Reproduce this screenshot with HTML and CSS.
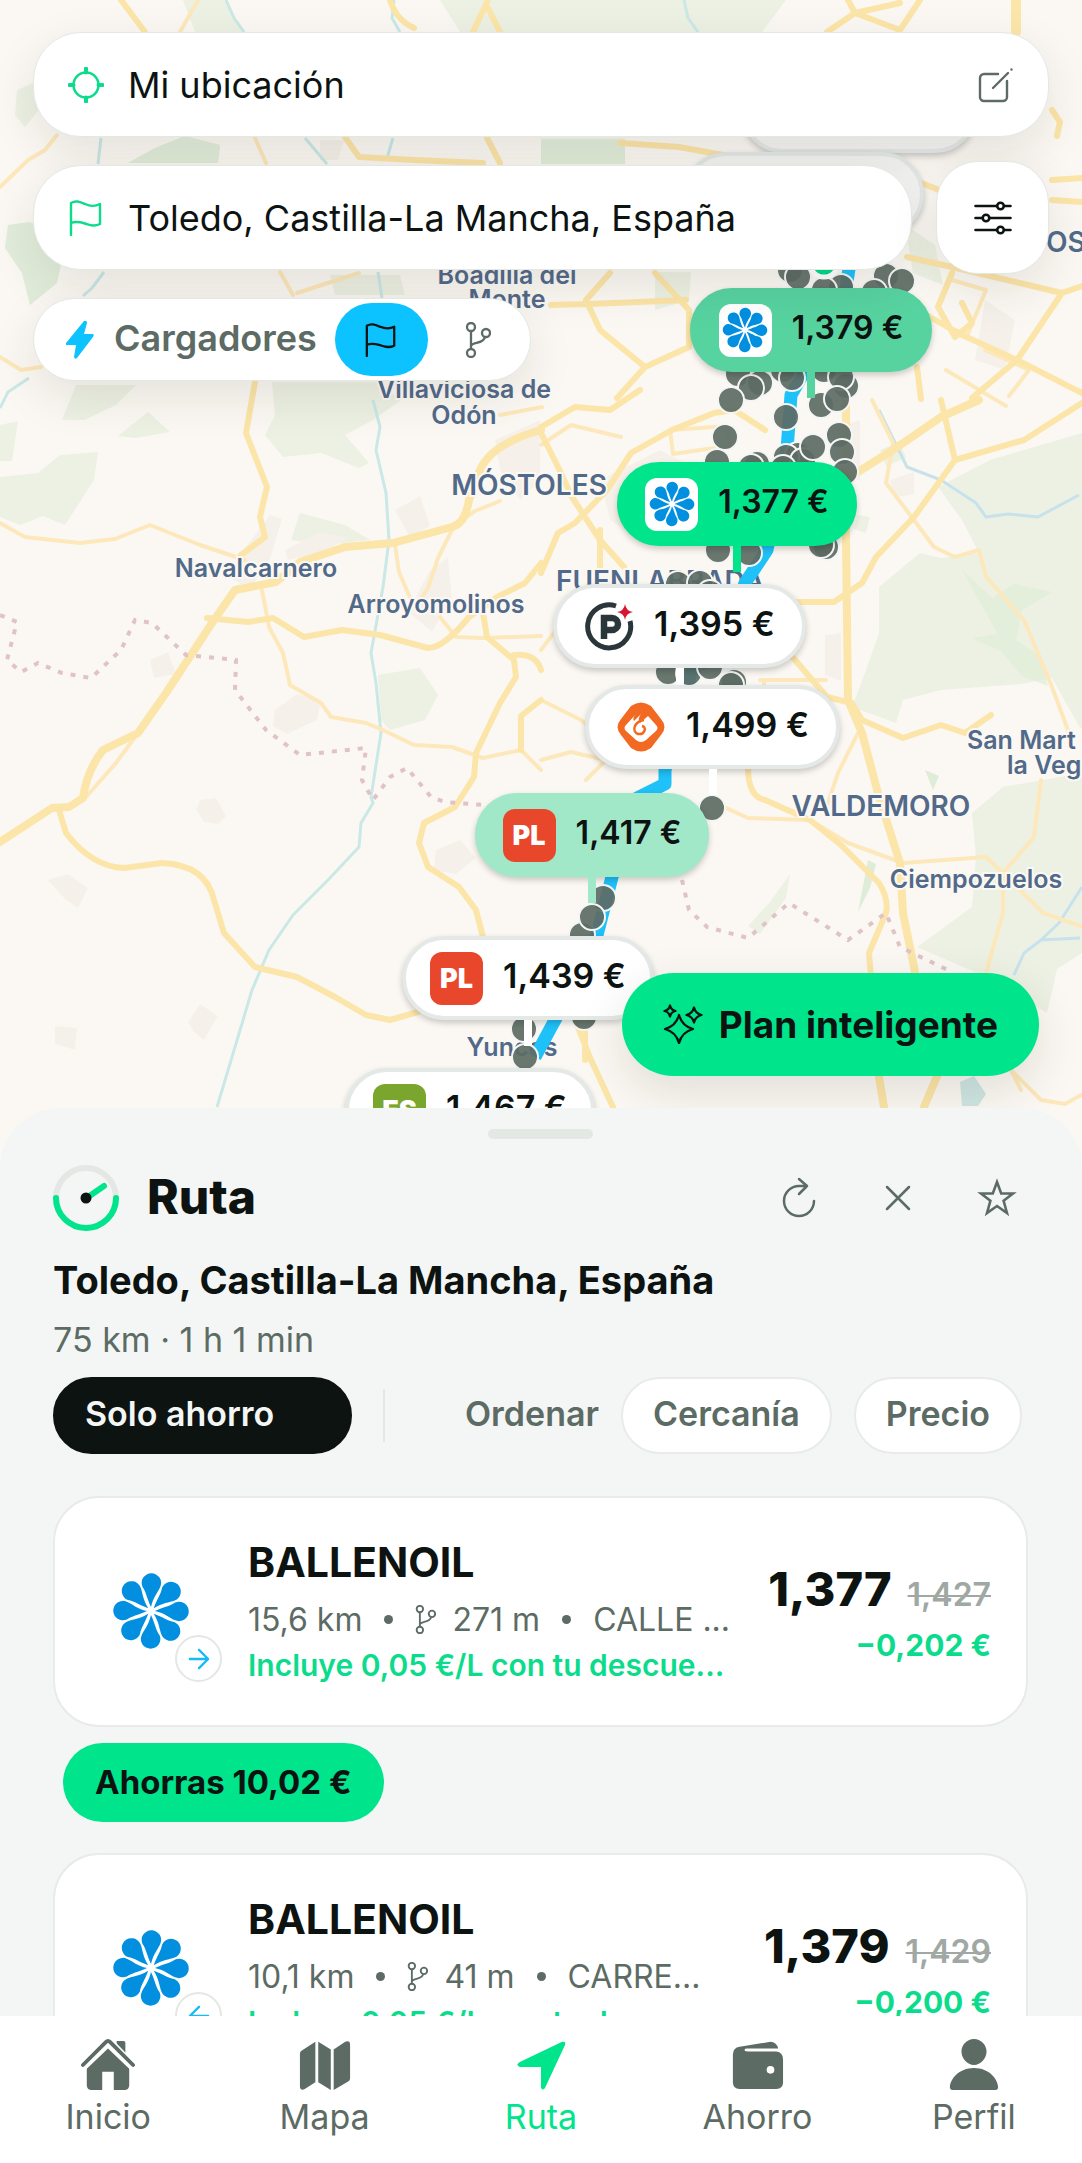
FILE: index.html
```html
<!DOCTYPE html>
<html lang="es">
<head>
  <meta charset="UTF-8">
  <meta name="viewport" content="width=device-width, initial-scale=1.0">
  <title>Ruta</title>
  <link rel="stylesheet" href="styles.css">
</head>
<body>
  <!-- Shared icons -->
  <svg class="sprite" aria-hidden="true">
    <symbol id="flag" viewBox="0 0 36 36">
      <path d="M3 35V3c5-3 9-1 14 1s9 3 15 0v20c-6 3-10 1-15-.500S8 21 3 23" fill="none" stroke="currentColor" stroke-width="2.400" stroke-linecap="round" stroke-linejoin="round"/>
    </symbol>
    <symbol id="branch" viewBox="0 0 26 36">
      <g fill="none" stroke="currentColor" stroke-width="2.300">
        <circle cx="6" cy="5" r="4"/><circle cx="6" cy="31" r="4"/><circle cx="21" cy="11" r="4"/>
        <path d="M6 9v18M6 24c1-4 13-2 14-9"/>
      </g>
    </symbol>
    <symbol id="ballenoil" viewBox="-50 -50 100 100">
      <g fill="#028fe0">
        <path id="petal" d="M0-5C-6-18-6-24-11-31A12.500 12.500 0 1 1 12-31C9-24 3-18 0-5z"/>
        <use href="#petal" transform="rotate(45)"/><use href="#petal" transform="rotate(90)"/>
        <use href="#petal" transform="rotate(135)"/><use href="#petal" transform="rotate(180)"/>
        <use href="#petal" transform="rotate(225)"/><use href="#petal" transform="rotate(270)"/>
        <use href="#petal" transform="rotate(315)"/>
      </g>
    </symbol>
  </svg>

  <div class="app">
    <div class="map">
      <svg class="map-tiles" viewBox="0 0 1082 1240" preserveAspectRatio="xMidYMin slice" aria-hidden="true">
        <rect width="1082" height="1240" fill="#fbf8f3"/>
        <!-- Parks and woods -->
        <g fill="#ecf1e3">
          <path d="M183 0h42l18 32h-48zM17 90l23-10 5 20-8 12-12 15-10-12zM128 163l27-15 30-12 35 9-2 18zM8 225l22-3 25 13 6 28-4 20-27 22-8-32-17-25z"/>
          <path d="M440 0h346l-24 32H460zM541 138h84v26h-84zM655 272h36l-2 28-34 10zM330 275h70l5 20h-70z"/>
          <path d="M0 477l38-4 22-18 38-3-4 28-29 45-22-9-23 9-20-8zM62 420l14-35h60l-20 20-32 15zM118 436l30-24 22 20-35 6zM0 425l18-4-6 40H0z"/>
          <path d="M272 382h105l24 18-28 20-28 15 24 28-10 5-38-15-38 4-18-22 10-20zM300 513l45 12 25 15-45 5-34-5zM378 675l42-7 18 27-13 25-35 10-9-10z"/>
          <path d="M1082 433l-92 27-52 27 24 33 17 33-38 5-21-5-41 34v46l-14 40-13 34 44 16 7-23 38-10 80-6 31-6 28 50h22zM1082 773l-79 14-31 26 4 44-4 50-55 40 60 26 70 40 10-44 25-16z"/>
          <path d="M905 225l30 20 8 40-30-12zM880 450l20-8 6 16-20 8zM858 515l12 2-4 16-12-4zM748 926l22-24 20-28-4 24-26 36z"/>
        </g>
        <g fill="#dfecd7">
          <path d="M962 570l30 28 22-14 38 8-30 18-6 30 24 16 8 30-26-10-20-24-30-14 26-4z" opacity=".7"/>
          <path d="M868 860l8 4-6 24-12 24zM925 770l14 6-6 14z"/>
          <path d="M128 163l27-15 30-12 35 9-2 18zM8 225l22-3 25 13 6 28-4 20-27 22-8-32-17-25zM541 140h84v24h-84z" opacity=".8"/>
        </g>
        <!-- Built-up areas -->
        <g fill="#f5f1ea">
          <path d="M240 555l30-40 12 4-12 40-20 30-18-10zM285 550l35-18 28 6-25 14-35 8zM395 510l25-14 10 30-20 12zM430 570l18-12 4 40-20 34-24-20zM275 710l22-16 24 6-4 20-30 14-14-8z"/>
          <path d="M200 800l16-2 10 18-8 8-14-2-8-12zM48 880l20-6 20 14-10 20-14-10zM55 1026l22 2-2 22-20-6zM188 1022l12-18 18 12-14 24-10-8zM436 850l24-10 16 18-20 16-22-4zM150 660l18-8 8 22-22 4z"/>
          <path d="M495 440l45-20v60l-20 20-20-30zM600 480l60-30 40 20-60 70-30-20zM825 635l16-2v48l-16-6zM890 480l24-8v22l-20 4zM985 300l30 20-10 50-30-10zM830 430l30-10v60h-20zM320 140h24l-6 20h-18z"/>
        </g>
        <!-- Rivers -->
        <g fill="none" stroke="#c9e8e6" stroke-width="3" stroke-linejoin="round">
          <path d="M373 400l7 27-4 23 10 43 3 47-6 47-12 66 5 30 5 50-10 64 2 6-12 20-2 24-31 33-35 35-24 35-17 40-17 57-18 60M101 138l-3 26M104 272l-12 16-9 8M0 408l8-16 21-14M226 0l8 18 10 14M305 138l22 26M378 272l4 26M394 0l-2 18 8 14M393 138l-6 20M684 0l4 18 10 14"/>
          <path d="M879 410l28 57 34 13 35 23 10 14 22-3 30 3 41-22M1082 887l-23 36-18 17-17 13-10 22M1040 940l40-2" stroke="#c7e2ea"/>
          <path d="M960 1082l14-6 12 18-8 12h-16z" fill="#cfe6e4" stroke="none"/>
        </g>
        <!-- Minor roads -->
        <g fill="none" stroke="#fde8bb" stroke-width="4" stroke-linecap="round" stroke-linejoin="round">
          <path d="M0 523l25 14 55 6 35-4 35-14 50 20 45 15M262 590l7 37 14 26 7 32 31 18 10 14 35 6 17 7 31 15 38 2 31 11 38-8 20 20M138 733l-22 30-30 34"/>
          <path d="M395 545l4 27 12 28M452 530l-14 28-10 30-8 12M455 525l20-14 25-10M500 415l42-8M440 617l16 20 27 1 58-2"/>
          <path d="M872 400l21 43-7 40 28 37 20 27 21 10 24-7 7 27 38 43 28 67 17 46M724 807l24 11 62 2 38 23 55 20 83-6 17 16v40l-17 60M1041 780l-7 57-31 36 40 40 40 14"/>
          <path d="M541 445l30-20 50 12M541 700l40 20 35 30-30 30M541 650l30-40 50-12M600 590l60 10 60 40M760 680h66M764 680v20M775 690v40M541 760l30-8 60 14M858 733l-20 40-10 30M670 430l58-4v20l-55 8zM640 540l30-30 36 30M1021 1090l-10-20 30 30 24 4 18-10"/>
          <path d="M359 273l-62 20M280 272l13 23M0 187l28-27 17-10 12-15M198 0l-18 32M255 138l11 25M0 357l21 13 20-3M946 370l60 36M985 350l44 20-20 26M952 280l34 10-18 44-20-6"/>
        </g>
        <!-- Main roads -->
        <g fill="none" stroke="#fce5a8" stroke-width="6" stroke-linecap="round" stroke-linejoin="round">
          <path d="M255 382l-9 51 21 54-7 30 5 20-24 18"/>
          <path d="M541 430q-50 14-61 40l-11 30q-4 24-17 27l-59 16-48 4-45 15-24 20-41 8-21 30-48 73-28 40-35 17q-16 20-20 48l-14 9-17 1-52 34" stroke-width="8"/>
          <path d="M207 618l41 4 25-4 31 19 38-7 38 5 48 13q16 0 41-31l28-20 28-14 16-20"/>
          <path d="M483 613l4 24 27 23 2 17-16 26-24 50-2 24-19 30-31 16-5 20 9 24 31 20 17 23 7 27M514 655q22-2 27 15M541 700l-20 16v34"/>
          <path d="M59 810l7 23q26 34 58 35l38-5q44 2 52 37l10 33 31 34 42 10 38 20 31 18 24 5 28-8"/>
          <path d="M575 1020l16 40 22 47M585 1030v30"/>
          <path d="M845 480l48-30 48-33 38-17M846 400v140l2 160 14 33 17 64 21 66 3 50 12 59M884 1107l-10-60M924 1107l17-40" stroke-width="8"/>
          <path d="M1082 403l-58 37-69 20-41 57-38 40-14 26-28 19-38 0M941 400l14 60M789 653l38 44 25 6 10 17 41 18 38-13 24 8M965 733l26-18"/>
          <path d="M748 767q0 30 17 33l45 20 31 25 38 38q10 16 7 30l-17 40 5 60"/>
          <path d="M541 427l34-20 35 3 30-20M541 433l17 34 14 30 28 43 24 27M541 573l17-40 17-10 32-33 24-37 41-23 42-17 20-3 31 20M600 530v40M780 615q-14 20-10 40"/>
          <path d="M121 0l24 32M345 137l14 20 55 3 69 3M487 138l13 25M390 0q6 20 24 28M488 0l-15 32M488 8l12 24M848 0l7 13-28 19M920 0l-20 30-45-17 45-10M620 143l59 4 55 10M1052 110l8 12-3 14M914 180l30 12M1052 180l30-2M1052 200l30 2"/>
          <path d="M1016 0v32" stroke-width="10"/>
          <path d="M610 273l-24 27 14 30 45 37-28 31M551 305l40-1 95-4M655 273l34 37v37l-44 20M952 273l-14 34 17 30 17-14-10-20M907 257l45 10 110 26 20-7M1062 293l-45 67-45 38M1017 360l65 33M900 300l60 34 57 26M917 367l4 32"/>
        </g>
        <!-- Province boundary -->
        <path d="M0 615l17 7-10 38 14 12 17-9 24 10 29 5 30-28 14-30 17 3 34 32 50 5-1 30 31 40 34 25 66-7-4 32 11 20 17-23 17-9 24 29 14 5 38 3M682 880l7 30 18 17 41 11 41-35 59 37 38-27 14 34 52 25" fill="none" stroke="#e0c3c8" stroke-width="4" stroke-dasharray="5 8"/>
        <!-- Town names -->
        <g class="town" text-anchor="middle">
          <text x="507" y="284">Boadilla del</text>
          <text x="507" y="308">Monte</text>
          <text x="464" y="398">Villaviciosa de</text>
          <text x="464" y="424">Odón</text>
          <text x="529" y="495" class="city">MÓSTOLES</text>
          <text x="256" y="577">Navalcarnero</text>
          <text x="436" y="613">Arroyomolinos</text>
          <text x="660" y="591" class="city">FUENLABRADA</text>
          <text x="881" y="816" class="city">VALDEMORO</text>
          <text x="976" y="888">Ciempozuelos</text>
          <text x="512" y="1056">Yuncos</text>
        </g>
        <g class="town">
          <text x="967" y="749">San Mart</text>
          <text x="1007" y="774">la Veg</text>
          <text x="1046" y="252" class="city">OS</text>
        </g>
        <!-- Route and stations off the shortlist -->
        <path d="M850 262l-6 40-53 93-4 55-20 100-22 33-20 60-34 30-26 97v14l-28 14-25 79-15 58-42 85-20 37" fill="none" stroke="#1fc1f9" stroke-width="13" stroke-linejoin="round"/>
        <g class="station">
          <circle cx="790" cy="270" r="13"/><circle cx="798" cy="277" r="13"/><circle cx="841" cy="287" r="13"/><circle cx="824" cy="290" r="13"/><circle cx="886" cy="276" r="13"/><circle cx="902" cy="281" r="13"/><circle cx="874" cy="292" r="13"/>
          <circle cx="738" cy="374" r="13"/><circle cx="760" cy="383" r="13"/><circle cx="751" cy="388" r="13"/><circle cx="731" cy="400" r="13"/><circle cx="783" cy="370" r="13"/><circle cx="792" cy="378" r="13"/><circle cx="824" cy="370" r="13"/><circle cx="846" cy="386" r="13"/><circle cx="841" cy="377" r="13"/><circle cx="821" cy="405" r="13"/><circle cx="837" cy="399" r="13"/>
          <circle cx="786" cy="417" r="13"/><circle cx="725" cy="437" r="13"/><circle cx="717" cy="462" r="13"/><circle cx="757" cy="464" r="13"/><circle cx="751" cy="467" r="13"/><circle cx="798" cy="455" r="13"/><circle cx="786" cy="457" r="13"/><circle cx="803" cy="461" r="13"/><circle cx="783" cy="468" r="13"/><circle cx="813" cy="447" r="13"/><circle cx="839" cy="435" r="13"/><circle cx="842" cy="452" r="13"/><circle cx="845" cy="472" r="13"/>
          <circle cx="718" cy="550" r="13"/><circle cx="749" cy="553" r="13"/><circle cx="826" cy="547" r="13"/><circle cx="821" cy="545" r="13"/><circle cx="678" cy="584" r="13"/><circle cx="700" cy="583" r="13"/><circle cx="710" cy="593" r="13"/><circle cx="668" cy="672" r="13"/><circle cx="689" cy="673" r="13"/><circle cx="710" cy="667" r="13"/><circle cx="734" cy="682" r="13"/><circle cx="731" cy="685" r="13"/>
          <circle cx="712" cy="808" r="13"/><circle cx="603" cy="898" r="13"/><circle cx="582" cy="935" r="13"/><circle cx="592" cy="917" r="13"/><circle cx="584" cy="1017" r="13"/><circle cx="524" cy="1029" r="13"/><circle cx="525" cy="1057" r="13"/>
        </g>
        <circle cx="824" cy="263" r="14" fill="#00d98a" stroke="#fff" stroke-width="5"/>
      </svg>

      <button class="pin pin-a" type="button" aria-label="Gasolinera"></button>
      <button class="pin pin-b" type="button" aria-label="Gasolinera"></button>
      <button class="pin pin-c good" type="button"><span class="brand white"><svg><use href="#ballenoil"/></svg></span><span class="amount">1,379 €</span></button>
      <button class="pin pin-d best" type="button"><span class="brand white"><svg><use href="#ballenoil"/></svg></span><span class="amount">1,377 €</span></button>
      <button class="pin pin-e" type="button">
        <svg class="brand-icon" viewBox="0 0 50 50"><path d="M32 5A21.500 21.500 0 1 0 46 20" fill="none" stroke="#2b363b" stroke-width="5"/><path d="M20 38V17h8a6 6 0 0 1 0 12h-5" fill="none" stroke="#2b363b" stroke-width="6.500"/><path d="M41 3q1 7 8 8-7 1-8 8-1-7-8-8 7-1 8-8z" fill="#d9142f"/></svg>
        <span class="amount">1,395 €</span>
      </button>
      <button class="pin pin-f" type="button">
        <svg class="brand-icon" viewBox="0 0 50 50"><path d="M15 4q10-7 20 0l10 13q7 8 0 16L35 46q-10 7-20 0L5 33q-7-8 0-16z" fill="#f26a21"/><path d="M20 12 10 23q-3 3 0 6l10 9q5 4 10 0l10-9q3-3 0-6l-8-9-8 7q-3-4 1-9l-7 7q-2-3 2-7z" fill="#fff"/><path d="M28 18c-11 2-12 12-6 14 7 1 9-7 4-8" fill="none" stroke="#f26a21" stroke-width="2.500"/></svg>
        <span class="amount">1,499 €</span>
      </button>
      <button class="pin pin-g fair" type="button"><span class="brand red">PL</span><span class="amount">1,417 €</span></button>
      <button class="pin pin-h" type="button"><span class="brand red">PL</span><span class="amount">1,439 €</span></button>
      <button class="pin pin-i" type="button"><span class="brand green">ES</span><span class="amount">1,467 €</span></button>
    </div>

    <header class="search">
      <div class="field">
        <label for="origin" aria-label="Origen">
          <svg class="icon green-icon" viewBox="0 0 36 36"><g fill="none" stroke="currentColor" stroke-width="2.500" stroke-linecap="round"><circle cx="18" cy="18" r="12.500"/><path d="M18 1.500v4M18 30.500v4M1.500 18h4M30.500 18h4" stroke-width="4"/></g></svg>
        </label>
        <input id="origin" type="text" value="Mi ubicación">
        <button class="plain" type="button" aria-label="Editar">
          <svg class="icon" viewBox="0 0 36 36"><path d="M20 7H6a4 4 0 0 0-4 4v19a4 4 0 0 0 4 4h19a4 4 0 0 0 4-4V14M15 21 30 6M33.500 2.500v0" fill="none" stroke="currentColor" stroke-width="2.400" stroke-linecap="round"/></svg>
        </button>
      </div>
      <div class="row">
        <div class="field">
          <label for="destination" aria-label="Destino"><svg class="icon green-icon"><use href="#flag"/></svg></label>
          <input id="destination" type="text" value="Toledo, Castilla-La Mancha, España">
        </div>
        <button class="filter" type="button" aria-label="Filtros">
          <svg viewBox="0 0 38 38"><g fill="#fff" stroke="currentColor" stroke-width="2.600" stroke-linecap="round"><path d="M1.500 7h35M1.500 19h35M1.500 31h35"/><circle cx="26.500" cy="7" r="3.300"/><circle cx="12" cy="19" r="3.300"/><circle cx="26.500" cy="31" r="3.300"/></g></svg>
        </button>
      </div>
      <div class="chargers">
        <svg class="bolt" viewBox="0 0 28 38"><path d="M18 0 0 22q-1 2 1 2h9L8 36q1 3 3 1l16-21q2-3-1-3h-8l3-11q0-3-3-2z" fill="#0cc3ff"/></svg>
        <span>Cargadores</span>
        <button class="active" type="button" aria-label="En destino"><svg class="mode-flag"><use href="#flag"/></svg></button>
        <button type="button" aria-label="En ruta"><svg class="mode-branch"><use href="#branch"/></svg></button>
      </div>
    </header>

    <button class="smart-plan" type="button">
      <svg viewBox="0 0 40 40"><g fill="none" stroke="currentColor" stroke-width="2.300" stroke-linejoin="round"><path d="M16 11q3 11 14 14-11 3-14 14-3-11-14-14 11-3 14-14z"/><path d="M31 3.500q1.500 6 7.500 7.500-6 1.500-7.500 7.500-1.500-6-7.500-7.500 6-1.500 7.500-7.500z"/><path d="M7 1.500q1 4.500 5.500 5.500Q8 8 7 12.500 6 8 1.500 7 6 6 7 1.500z"/></g></svg>
      Plan inteligente
    </button>

    <main class="sheet">
      <div class="handle"></div>
      <div class="sheet-head">
        <svg class="gauge" viewBox="0 0 66 66"><g fill="none" stroke-width="6" stroke-linecap="round"><circle cx="33" cy="33" r="30" stroke="#e3e8e5"/><path d="M3 33a30 30 0 0 0 60 0M35 32l16-11" stroke="#00e48c"/></g><circle cx="33" cy="33" r="5.500" fill="#0c1311"/></svg>
        <h1>Ruta</h1>
        <button class="plain" type="button" aria-label="Recalcular"><svg viewBox="0 0 44 44"><path d="M37 25A15 15 0 1 1 22 10h8M22 3l8 7-8 8" fill="none" stroke="currentColor" stroke-width="2.500" stroke-linecap="round" stroke-linejoin="round"/></svg></button>
        <button class="plain" type="button" aria-label="Cerrar"><svg viewBox="0 0 44 44"><path d="m11 11 22 22M33 11 11 33" fill="none" stroke="currentColor" stroke-width="2.500" stroke-linecap="round"/></svg></button>
        <button class="plain" type="button" aria-label="Guardar ruta"><svg viewBox="0 0 44 44"><path d="m22 6 4.200 11.500H38l-9.400 7.300L32 37l-10-7-10 7 3.400-12.200L6 17.500h11.800z" fill="none" stroke="currentColor" stroke-width="2.600"/></svg></button>
      </div>
      <h2>Toledo, Castilla-La Mancha, España</h2>
      <p class="summary">75 km · 1 h 1 min</p>

      <div class="chips">
        <button class="chip dark" type="button" aria-pressed="true">Solo ahorro</button>
        <span class="divider"></span>
        <span class="sort">Ordenar</span>
        <button class="chip" type="button">Cercanía</button>
        <button class="chip" type="button">Precio</button>
      </div>

      <article class="card">
        <div class="logo">
          <svg class="logo-mark"><use href="#ballenoil"/></svg>
          <span class="direction"><svg viewBox="0 0 24 24"><path d="M2 12h19M12 2l10 10-10 10" fill="none" stroke="#19b9f5" stroke-width="2.500" stroke-linecap="round" stroke-linejoin="round"/></svg></span>
        </div>
        <div class="info">
          <h3>BALLENOIL</h3>
          <p class="meta"><span>15,6 km</span><i></i><span class="detour"><svg><use href="#branch"/></svg>271 m</span><i></i><span>CALLE ...</span></p>
          <p class="promo">Incluye 0,05 €/L con tu descue...</p>
        </div>
        <div class="price">
          <p class="now"><strong>1,377</strong><s>1,427</s></p>
          <p class="saving">−0,202 €</p>
        </div>
      </article>
      <p class="total">Ahorras 10,02 €</p>

      <article class="card">
        <div class="logo">
          <svg class="logo-mark"><use href="#ballenoil"/></svg>
          <span class="direction"><svg viewBox="0 0 24 24"><path d="M22 12H3M12 2 2 12l10 10" fill="none" stroke="#19b9f5" stroke-width="2.500" stroke-linecap="round" stroke-linejoin="round"/></svg></span>
        </div>
        <div class="info">
          <h3>BALLENOIL</h3>
          <p class="meta"><span>10,1 km</span><i></i><span class="detour"><svg><use href="#branch"/></svg>41 m</span><i></i><span>CARRE...</span></p>
          <p class="promo">Incluye 0,05 €/L con tu des...</p>
        </div>
        <div class="price">
          <p class="now"><strong>1,379</strong><s>1,429</s></p>
          <p class="saving">−0,200 €</p>
        </div>
      </article>
    </main>

    <nav class="tabs">
      <a href="#inicio"><svg viewBox="0 0 56 56"><g fill="currentColor"><path d="M28 11 50 32v17q0 5-5 5H34V35H22v19H11q-5 0-5-5V32z"/><path d="M37 3h7q2 0 2 2v14l-9-8z"/></g><path d="M2 29 26 4q2-2 4 0l24 25" fill="none" stroke="#fff" stroke-width="8"/><path d="M2 28 26 4q2-2 4 0l24 24" fill="none" stroke="currentColor" stroke-width="4" stroke-linecap="round"/></svg>Inicio</a>
      <a href="#mapa"><svg viewBox="0 0 56 56"><path d="M18 4v42L7 53q-5 2-5-3V16q0-2 2-3zM21 4l13 8v42l-13-8zM37 12l12-8q5-2 5 3v35q0 2-2 3l-15 9z" fill="currentColor"/></svg>Mapa</a>
      <a href="#ruta" class="current" aria-current="page"><svg viewBox="0 0 56 56"><path d="M6 25 50 4q4-1 3 3L32 52q-3 3-4-1V30H6q-5-2 0-5z" fill="currentColor"/></svg>Ruta</a>
      <a href="#ahorro"><svg viewBox="0 0 56 56"><path d="M10 9 42 4q6 0 8 7H18q-3 0-3 1.500t3 1.500h30q7 1 7 8v24q0 7-7 7H10q-7 0-7-7V17q0-7 7-8z" fill="currentColor"/><circle cx="42" cy="33" r="4" fill="#fff"/></svg>Ahorro</a>
      <a href="#perfil"><svg viewBox="0 0 56 56"><path d="M28 1c7 0 13 6 13 13S35 28 28 28 15 21 15 14 21 1 28 1zM28 31c16 0 25 12 25 20q0 3-4 3H7q-4 0-4-3c0-8 9-20 25-20z" fill="currentColor"/></svg>Perfil</a>
    </nav>
  </div>
</body>
</html>
```

FILE: styles.css
```css
* {
  box-sizing: border-box;
}

body {
  margin: 0;
  font-family: Inter, "Liberation Sans", sans-serif;
  font-size: 32px;
  color: #0c1311;
  background-color: #f4f6f5;
}

h1, h2, h3, p {
  margin: 0;
}

svg {
  display: block;
  flex: none;
}

button, input {
  font: inherit;
  color: inherit;
  border: none;
  background: none;
  padding: 0;
}

button {
  cursor: pointer;
}

.sprite {
  position: absolute;
  width: 0;
  height: 0;
}

.app {
  position: relative;
  height: 100vh;
  display: flex;
  flex-direction: column;
  overflow: hidden;
}

/* Map */
.map {
  position: absolute;
  inset: 0;
  overflow: hidden;
}

.map-tiles {
  width: 100%;
  height: 1240px;
}

.town {
  font-size: 25px;
  font-weight: 600;
  fill: #526a8a;
  stroke: #fbf8f3;
  stroke-width: 4px;
  paint-order: stroke;
}

.city {
  font-size: 28px;
}

.station {
  fill: #5c6b64;
  fill-opacity: 0.92;
  stroke: #f4f6f5;
  stroke-width: 2px;
}

.pin {
  position: absolute;
  height: 84px;
  display: flex;
  align-items: center;
  justify-content: center;
  gap: 20px;
  border-radius: 42px;
  border: 4px solid #e4e8e6;
  background-color: #fff;
  box-shadow: 0 3px 6px rgba(0, 0, 0, 0.2);
  font-size: 34px;
  font-weight: 600;
  white-space: nowrap;
}

/* stem that joins the label to its station */
.pin::after {
  content: "";
  position: absolute;
  top: 80px;
  left: 50%;
  width: 8px;
  height: 26px;
  margin-left: -4px;
  background-color: #fff;
}

.pin.best, .pin.good, .pin.fair {
  font-size: 32px;
}

.pin.best { background-color: #00e48c; border-color: #00e48c; }
.pin.good { background-color: #57d3a0; border-color: #57d3a0; }
.pin.fair { background-color: #a0e8c8; border-color: #a0e8c8; }
.pin.best::after { background-color: #00e48c; }
.pin.good::after { background-color: #57d3a0; }
.pin.fair::after { background-color: #a0e8c8; }

.pin-a { left: 741px; top: 69px; width: 236px; }
.pin-b { left: 684px; top: 152px; width: 240px; }
.pin-c { left: 690px; top: 288px; width: 242px; }
.pin-d { left: 617px; top: 462px; width: 240px; }
.pin-e { left: 553px; top: 584px; width: 253px; }
.pin-f { left: 585px; top: 685px; width: 255px; }
.pin-g { left: 475px; top: 793px; width: 234px; }
.pin-h { left: 402px; top: 936px; width: 252px; }
.pin-i { left: 345px; top: 1068px; width: 250px; }

.pin-a, .pin-b {
  background-color: #f4f4f3;
}

.amount {
  padding-bottom: 5px;
}

.brand {
  width: 53px;
  height: 53px;
  display: flex;
  align-items: center;
  justify-content: center;
  border-radius: 12px;
  color: #fff;
  font-size: 27px;
  font-weight: 900;
}

.brand svg {
  width: 46px;
  height: 46px;
}

.brand.white { background-color: #fff; }
.brand.red { background-color: #e9472c; }
.brand.green { background-color: #7ba62e; }

.brand-icon {
  width: 50px;
  height: 50px;
}

/* Search bars */
.search {
  position: relative;
  display: flex;
  flex-direction: column;
  gap: 24px;
  padding: 32px 33px 0;
}

.field {
  height: 105px;
  display: flex;
  flex: 1 0 auto;
  align-items: center;
  padding: 0 34px;
  border: 1px solid #e3e8e5;
  border-radius: 48px;
  background-color: #fff;
  box-shadow: 0 16px 48px rgba(40, 30, 20, 0.1);
}

.field input {
  flex: 1;
  min-width: 0;
  margin-left: 24px;
  font-size: 36px;
  outline: none;
}

.icon {
  width: 36px;
  height: 36px;
}

.green-icon {
  color: #0bdc8c;
}

.plain {
  color: #5c6b64;
}

.row {
  display: flex;
  align-items: center;
  gap: 24px;
}

.filter {
  width: 113px;
  height: 113px;
  display: flex;
  align-items: center;
  justify-content: center;
  border: 1px solid #e3e8e5;
  border-radius: 42px;
  background-color: #fff;
  box-shadow: 0 16px 48px rgba(40, 30, 20, 0.1);
}

.filter svg {
  width: 38px;
  height: 38px;
}

.chargers {
  align-self: flex-start;
  display: flex;
  align-items: center;
  height: 83px;
  padding: 0 5px 0 32px;
  border: 1px solid #e3e8e5;
  border-radius: 42px;
  background-color: #fff;
  box-shadow: 0 16px 48px rgba(40, 30, 20, 0.1);
  color: #5c6b64;
  font-size: 36px;
  font-weight: 600;
}

.bolt {
  width: 28px;
  height: 38px;
  margin-right: 20px;
}

.chargers span {
  margin-right: 18px;
  padding-bottom: 3px;
}

.chargers button {
  width: 93px;
  height: 73px;
  display: flex;
  align-items: center;
  justify-content: center;
  border-radius: 37px;
}

.chargers button + button {
  margin-left: 4px;
}

.chargers .active {
  background-color: #0cc3ff;
  color: #0c1311;
}

.mode-flag {
  width: 34px;
  height: 34px;
}

.mode-branch {
  width: 26px;
  height: 36px;
}

.smart-plan {
  position: relative;
  align-self: flex-end;
  display: flex;
  align-items: center;
  gap: 16px;
  height: 103px;
  margin: auto 43px 32px 0;
  padding: 0 41px;
  border-radius: 52px;
  background-color: #00e48c;
  box-shadow: 0 16px 48px rgba(40, 30, 20, 0.12);
  font-size: 37px;
  font-weight: 700;
}

.smart-plan svg {
  width: 40px;
  height: 40px;
}

/* Bottom sheet */
.sheet {
  position: relative;
  flex: none;
  height: 42vh;
  padding: 21px 54px 0 53px;
  overflow: hidden;
  border-radius: 60px 60px 0 0;
  background-color: #f4f6f5;
}

.handle {
  width: 105px;
  height: 10px;
  margin: 0 auto 26px;
  border-radius: 5px;
  background-color: #e3e8e5;
}

.sheet-head {
  display: flex;
  align-items: center;
  height: 66px;
  margin-right: -18px;
}

.gauge {
  width: 66px;
  height: 66px;
}

.sheet-head h1 {
  margin: 0 auto 0 28px;
  padding-bottom: 3px;
  font-size: 48px;
  font-weight: 800;
}

.sheet-head button {
  width: 99px;
  height: 66px;
  display: flex;
  align-items: center;
  justify-content: center;
}

.sheet-head button svg {
  width: 44px;
  height: 44px;
}

.sheet h2 {
  margin-top: 24px;
  font-size: 38px;
  line-height: 50px;
  font-weight: 700;
}

.summary {
  margin-top: 13px;
  font-size: 34px;
  line-height: 44px;
  color: #5c6b64;
}

.chips {
  display: flex;
  align-items: center;
  margin: 15px 6px 42px 0;
  font-size: 34px;
  font-weight: 600;
  color: #5c6b64;
}

.chip {
  height: 77px;
  padding: 0 30px 4px;
  border: 2px solid #e8ebea;
  border-radius: 39px;
  background-color: #fff;
  margin-left: 22px;
}

.chip.dark {
  margin-left: 0;
  padding-right: 76px;
  border-color: #0c1311;
  background-color: #0c1311;
  color: #f4f6f5;
}

.sort {
  padding-bottom: 4px;
}

.divider {
  width: 2px;
  height: 53px;
  margin: 0 auto 0 31px;
  background-color: #e3e8e5;
}

.card {
  display: flex;
  align-items: center;
  padding: 38px 35px 38px 57px;
  border: 2px solid #e8ebea;
  border-radius: 46px;
  background-color: #fff;
}

.logo {
  position: relative;
  flex: none;
  margin-right: 58px;
}

.logo-mark {
  width: 78px;
  height: 78px;
}

.direction {
  position: absolute;
  left: 63px;
  top: 63px;
  width: 47px;
  height: 47px;
  display: flex;
  align-items: center;
  justify-content: center;
  border: 2px solid #e3e8e5;
  border-radius: 50%;
  background-color: #fff;
}

.direction svg {
  width: 22px;
  height: 22px;
}

.info {
  flex: 1;
  min-width: 0;
  white-space: nowrap;
}

.info h3 {
  font-size: 41px;
  line-height: 52px;
  font-weight: 700;
}

.meta {
  display: flex;
  align-items: center;
  gap: 22px;
  margin-top: 9px;
  line-height: 46px;
  color: #5c6b64;
}

.meta i {
  width: 9px;
  height: 9px;
  border-radius: 50%;
  background-color: #5c6b64;
}

.detour {
  display: flex;
  align-items: center;
  gap: 16px;
}

.detour svg {
  width: 21px;
  height: 29px;
}

.promo {
  font-size: 30px;
  line-height: 44px;
  font-weight: 600;
  color: #0bdc8c;
}

.price {
  flex: none;
  padding-top: 4px;
  text-align: right;
}

.now {
  display: flex;
  align-items: baseline;
  justify-content: flex-end;
  gap: 16px;
  line-height: 56px;
}

.now strong {
  font-size: 47px;
  font-weight: 800;
}

.now s {
  font-weight: 600;
  color: #a0a8a4;
  text-decoration-thickness: 2px;
}

.saving {
  margin-top: 2px;
  font-size: 30px;
  line-height: 40px;
  font-weight: 700;
  color: #0bdc8c;
}

.total {
  width: fit-content;
  margin: 16px 0 31px 10px;
  padding: 0 32px;
  border-radius: 40px;
  background-color: #00e48c;
  font-size: 33px;
  line-height: 79px;
  font-weight: 700;
}

/* Bottom navigation */
.tabs {
  position: relative;
  flex: none;
  display: flex;
  height: 147px;
  padding-top: 22px;
  background-color: #fff;
}

.tabs a {
  flex: 1;
  display: flex;
  flex-direction: column;
  align-items: center;
  gap: 5px;
  color: #5c6b64;
  font-size: 34px;
  line-height: 40px;
  text-decoration: none;
}

.tabs svg {
  width: 54px;
  height: 54px;
}

.tabs .current {
  color: #00e48c;
}
```
